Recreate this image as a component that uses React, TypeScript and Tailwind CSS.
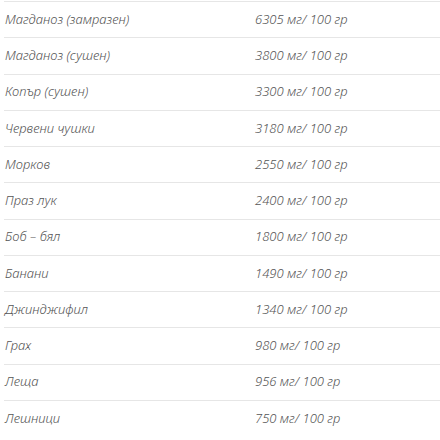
import React from "react";

const rows: [string, string][] = [
  ["Магданоз (замразен)", "6305 мг/ 100 гр"],
  ["Магданоз (сушен)", "3800 мг/ 100 гр"],
  ["Копър (сушен)", "3300 мг/ 100 гр"],
  ["Червени чушки", "3180 мг/ 100 гр"],
  ["Морков", "2550 мг/ 100 гр"],
  ["Праз лук", "2400 мг/ 100 гр"],
  ["Боб – бял", "1800 мг/ 100 гр"],
  ["Банани", "1490 мг/ 100 гр"],
  ["Джинджифил", "1340 мг/ 100 гр"],
  ["Грах", "980 мг/ 100 гр"],
  ["Леща", "956 мг/ 100 гр"],
  ["Лешници", "750 мг/ 100 гр"],
];

export default function App() {
  return (
    <div
      lang="bg"
      className="w-[440px] h-[440px] overflow-hidden bg-white pt-[1px] pl-[4px]"
      style={{ fontFamily: '"Noto Sans", "Liberation Sans", Arial, sans-serif' }}
    >
      {rows.map(([name, val], i) => (
        <div
          key={i}
          className="flex items-center h-[36.25px] border-t border-[#e6e6e6] italic font-[360] text-[13px] text-[#555555]"
        >
          <div className="w-[251px] pl-[1px]">{name}</div>
          <div>{val}</div>
        </div>
      ))}
    </div>
  );
}
